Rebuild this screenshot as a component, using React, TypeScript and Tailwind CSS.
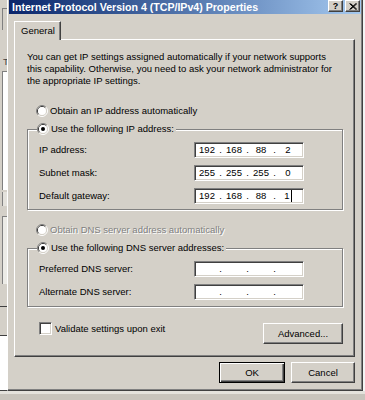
import { Fragment } from "react";

const face = "font-['Liberation_Sans',Arial,sans-serif]";

function Radio({ checked }: { checked?: boolean }) {
  return (
    <svg width="12" height="12" viewBox="0 0 12 12" className="shrink-0">
      <path d="M2.11 9.89A5.5 5.5 0 0 1 9.89 2.11" fill="none" stroke="#808080" />
      <path d="M9.89 2.11A5.5 5.5 0 0 1 2.11 9.89" fill="none" stroke="#ffffff" />
      <path d="M2.82 9.18A4.5 4.5 0 0 1 9.18 2.82" fill="none" stroke="#404040" />
      <path d="M9.18 2.82A4.5 4.5 0 0 1 2.82 9.18" fill="none" stroke="#d4d0c8" />
      <circle cx="6" cy="6" r="4" fill="#ffffff" />
      {checked ? <circle cx="6" cy="6" r="2" fill="#000000" /> : null}
    </svg>
  );
}

function IpBox({ parts, caret }: { parts: string[]; caret?: boolean }) {
  return (
    <div className="flex h-[16px] w-[110px] items-center border border-t-[#808080] border-l-[#808080] border-r-white border-b-white bg-white pl-[1px] shadow-[inset_1px_1px_0_#404040,inset_-1px_-1px_0_#d4d0c8]">
      {parts.map((p, i) => (
        <Fragment key={i}>
          {i > 0 ? <span className="w-[5px] text-center">.</span> : null}
          <span className="flex w-[22px] items-center justify-center">
            {p}
            {caret && i === 3 ? <span className="ml-[1px] inline-block h-[12px] w-px bg-black" /> : null}
          </span>
        </Fragment>
      ))}
    </div>
  );
}

function Row({ label, parts, caret }: { label: string; parts: string[]; caret?: boolean }) {
  return (
    <div className="flex items-center">
      <span className="ml-[2px] w-[155px]">{label}</span>
      <IpBox parts={parts} caret={caret} />
    </div>
  );
}

function Button({ label, primary, width }: { label: string; primary?: boolean; width: string }) {
  return (
    <div
      className={
        primary
          ? `flex h-[21px] ${width} items-center justify-center border border-black bg-[#d4d0c8] shadow-[inset_1px_1px_0_#ffffff,inset_-1px_-1px_0_#404040,inset_-2px_-2px_0_#808080]`
          : `flex h-[21px] ${width} items-center justify-center border border-t-white border-l-white border-r-[#404040] border-b-[#404040] bg-[#d4d0c8] shadow-[inset_-1px_-1px_0_#808080]`
      }>
      {label}
    </div>
  );
}

function LeftStrip() {
  return (
    <div className="flex w-[7px] shrink-0 flex-col border-b border-b-[#404040] bg-[#d4d0c8]">
      <div className="ml-[2px] mt-[8px] h-[22px] border-l border-t border-[#808080]" />
      <div className="mt-[26px] pl-[3px] text-[#404040]">T</div>
      <div className="ml-[2px] mt-[3px] h-[119px] border-l border-t border-[#808080] bg-white" />
      <div className="ml-[2px] mt-[2px] h-[14px] border-l border-[#808080] bg-[#e4e2dc]" />
      <div className="ml-[2px] mt-[10px] h-[68px] border-l border-t border-[#808080] bg-[#ecebe6]" />
      <div className="mt-[22px] border-t border-[#404040]" />
      <div className="mt-[28px] flex-1 border-t border-[#404040] bg-white" />
    </div>
  );
}

export default function App() {
  return (
    <div className={`flex h-[400px] w-[365px] flex-col overflow-hidden bg-[#d4d0c8] text-[9.5px] leading-[12px] text-black ${face}`}>
      <div className="flex h-[391px] shrink-0">
        <LeftStrip />
        <div className="flex w-[356px] shrink-0 flex-col border-b border-l border-r border-b-[#404040] border-l-white border-r-[#404040] bg-[#d4d0c8] pl-[1px] pr-[1px] shadow-[inset_-1px_-1px_0_#808080]">
          {/* title bar */}
          <div className="flex h-[14px] items-start bg-linear-to-r from-[#0a246a] to-[#a6caf0] pl-[3px] pr-[1px]">
            <span className="mt-[1px] flex-1 text-[10.6px] font-bold leading-[12px] text-white">
              Internet Protocol Version 4 (TCP/IPv4) Properties
            </span>
            <div className="flex h-[12px] w-[15px] items-center justify-center border border-t-white border-l-white border-r-[#404040] border-b-[#404040] bg-[#d4d0c8] text-[9px] font-bold leading-none shadow-[inset_-1px_-1px_0_#808080]">
              ?
            </div>
            <div className="ml-[2px] flex h-[12px] w-[15px] items-center justify-center border border-t-white border-l-white border-r-[#404040] border-b-[#404040] bg-[#d4d0c8] shadow-[inset_-1px_-1px_0_#808080]">
              <svg width="8" height="7" viewBox="0 0 8 7">
                <path d="M0.5 0.5L7 6.5M1.5 0.5L8 6.5M7 0.5L0.5 6.5M8 0.5L1.5 6.5" stroke="#000" strokeWidth="1" />
              </svg>
            </div>
          </div>

          {/* tab */}
          <div className="relative z-10 -mb-px ml-[5px] mt-[7px] flex h-[19px] w-[47px] items-center border-l border-r border-t border-l-white border-r-[#404040] border-t-white bg-[#d4d0c8] pl-[6px] shadow-[inset_-1px_0_0_#808080]">
            General
          </div>

          {/* panel */}
          <div className="ml-[5px] flex h-[318px] w-[341px] flex-col border border-b-[#404040] border-l-white border-r-[#404040] border-t-white pl-[12px] shadow-[inset_-1px_-1px_0_#808080]">
            <p className="mt-[11px] w-[306px]">
              You can get IP settings assigned automatically if your network supports this capability. Otherwise, you need to ask your network administrator for the appropriate IP settings.
            </p>

            <div className="ml-[9px] mt-[18px] flex h-[12px] items-center gap-[2px]">
              <Radio />
              <span>Obtain an IP address automatically</span>
            </div>

            <fieldset className="mt-[6px] w-[316px] border border-[#808080] pb-[5px] pl-[9px] pt-[7px] shadow-[inset_1px_1px_0_#ffffff,1px_1px_0_#ffffff]">
              <legend className="bg-[#d4d0c8] pr-[2px]">
                <div className="flex h-[12px] items-center gap-[2px]">
                  <Radio checked />
                  <span>Use the following IP address:</span>
                </div>
              </legend>
              <div className="flex flex-col gap-[7px]">
                <Row label="IP address:" parts={["192", "168", "88", "2"]} />
                <Row label="Subnet mask:" parts={["255", "255", "255", "0"]} />
                <Row label="Default gateway:" parts={["192", "168", "88", "1"]} caret />
              </div>
            </fieldset>

            <div className="ml-[9px] mt-[14px] flex h-[12px] items-center gap-[2px]">
              <Radio />
              <span className="text-[#808080] [text-shadow:1px_1px_0_#ffffff]">Obtain DNS server address automatically</span>
            </div>

            <fieldset className="mt-[6px] w-[316px] border border-[#808080] pb-[6px] pl-[9px] pt-[7px] shadow-[inset_1px_1px_0_#ffffff,1px_1px_0_#ffffff]">
              <legend className="bg-[#d4d0c8] pr-[2px]">
                <div className="flex h-[12px] items-center gap-[2px]">
                  <Radio checked />
                  <span>Use the following DNS server addresses:</span>
                </div>
              </legend>
              <div className="flex flex-col gap-[7px]">
                <Row label="Preferred DNS server:" parts={["", "", "", ""]} />
                <Row label="Alternate DNS server:" parts={["", "", "", ""]} />
              </div>
            </fieldset>

            <div className="mt-[15px] flex w-[316px] items-start justify-between">
              <div className="ml-[12px] flex items-center gap-[3px]">
                <div className="h-[13px] w-[13px] border border-b-white border-l-[#808080] border-r-white border-t-[#808080] bg-white shadow-[inset_1px_1px_0_#404040,inset_-1px_-1px_0_#d4d0c8]" />
                <span>Validate settings upon exit</span>
              </div>
              <div className="mt-[1px]">
                <Button label="Advanced..." width="w-[80px]" />
              </div>
            </div>
          </div>

          {/* buttons */}
          <div className="mt-[5px] flex justify-end gap-[6px] pr-[6px]">
            <Button label="OK" primary width="w-[66px]" />
            <Button label="Cancel" width="w-[64px]" />
          </div>
        </div>
        <div className="w-[2px] shrink-0 bg-[#f4f4f4]" />
      </div>
      <div className="flex-1 border-t-[3px] border-[#e4e2dc] bg-[#c8c4bc]" />
    </div>
  );
}
